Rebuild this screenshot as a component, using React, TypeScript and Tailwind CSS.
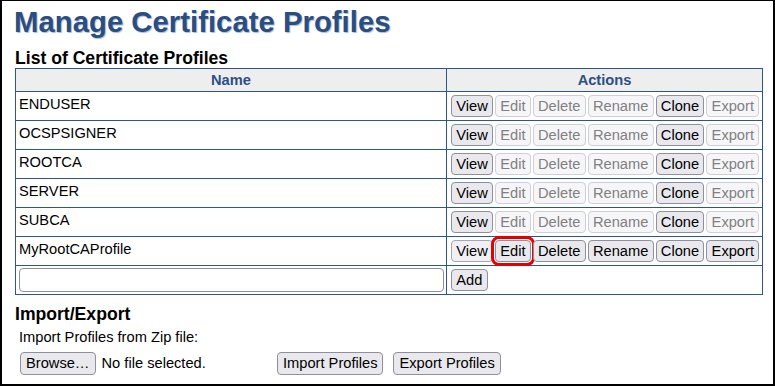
type Profile = {
  name: string
  editable: boolean
}

const profiles: Profile[] = [
  { name: 'ENDUSER', editable: false },
  { name: 'OCSPSIGNER', editable: false },
  { name: 'ROOTCA', editable: false },
  { name: 'SERVER', editable: false },
  { name: 'SUBCA', editable: false },
  { name: 'MyRootCAProfile', editable: true },
]

function Btn({
  label,
  disabled,
  highlight,
  light,
}: {
  label: string
  disabled?: boolean
  highlight?: boolean
  light?: boolean
}) {
  let cls = 'h-[22px] px-[4.25px] rounded-[4px] border leading-[20px] text-[14.67px] '
  if (disabled) {
    cls += 'bg-[#f6f6f8] border-[#cfcfd6] text-[#808080]'
  } else if (light) {
    cls += 'bg-[#f0f0f4] border-[#a6a6b2] text-black'
  } else {
    cls += 'bg-[#e9e9ed] border-[#8f8f9d] text-black'
  }
  if (highlight) {
    cls += ' outline-[3px] outline-solid outline-[#e60000] outline-offset-[1px]'
  }
  return (
    <button type="button" className={cls}>
      {label}
    </button>
  )
}

export default function App() {
  return (
    <div
      className="w-[775px] h-[386px] bg-white border-t border-l-2 border-r-2 border-b-2 border-black pl-[13px] text-[14.67px] text-black overflow-hidden"
      style={{ fontFamily: '"Liberation Sans", Arial, sans-serif' }}
    >
      {/* Title */}
      <h1 className="mt-[4px] h-[34px] leading-[34px] text-[29.33px] font-bold text-[#2b4e80] -ml-[1px] [text-shadow:1px_1px_1px_#a8bcdc]">
        Manage Certificate Profiles
      </h1>
      <h2 className="mt-[9px] h-[20px] leading-[20px] text-[17.6px] font-bold">
        List of Certificate Profiles
      </h2>

      {/* Table */}
      <div className="w-[748px] border border-[#2d5690]">
        <div className="flex h-[22px] bg-[#eeeeee] font-bold text-[#2c5086] leading-[17px]">
          <div className="w-[431px] border-r border-[#2d5690] flex items-center justify-center">
            Name
          </div>
          <div className="flex-1 flex items-center justify-center">Actions</div>
        </div>

        {profiles.map((p) => (
          <div key={p.name} className="flex h-[29px] border-t border-[#2d5690]">
            <div className="w-[431px] border-r border-[#2d5690] pl-[3px] pt-[4px] leading-[17px]">
              {p.name}
            </div>
            <div className="flex-1 flex items-center gap-[2px] pl-[4px]">
              <Btn label="View" light={p.editable} />
              <Btn label="Edit" disabled={!p.editable} highlight={p.editable} />
              <Btn label="Delete" disabled={!p.editable} />
              <Btn label="Rename" disabled={!p.editable} />
              <Btn label="Clone" />
              <Btn label="Export" disabled={!p.editable} />
            </div>
          </div>
        ))}

        <div className="flex h-[29px] border-t border-[#2d5690]">
          <div className="w-[431px] border-r border-[#2d5690] flex items-center pl-[3px]">
            <input
              type="text"
              className="w-[425px] h-[24px] border border-[#8f8f9d] rounded-[4px] bg-white px-[4px] outline-none"
            />
          </div>
          <div className="flex-1 flex items-center pl-[4px]">
            <Btn label="Add" />
          </div>
        </div>
      </div>

      {/* Import / Export */}
      <h2 className="mt-[9px] h-[20px] leading-[20px] text-[17.6px] font-bold">Import/Export</h2>
      <p className="mt-[5px] ml-[4px] leading-[17px]">Import Profiles from Zip file:</p>
      <div className="mt-[6px] ml-[5px] flex items-center">
        <div className="w-[257px] flex items-center">
          <button
            type="button"
            className="h-[23px] px-[5px] rounded-[4px] border border-[#8f8f9d] bg-[#e9e9ed] leading-[21px]"
          >
            Browse…
          </button>
          <span className="ml-[6px] leading-[17px]">No file selected.</span>
        </div>
        <button
          type="button"
          className="h-[23px] px-[5px] rounded-[4px] border border-[#8f8f9d] bg-[#e9e9ed] leading-[21px]"
        >
          Import Profiles
        </button>
        <button
          type="button"
          className="ml-[10px] h-[23px] px-[5px] rounded-[4px] border border-[#8f8f9d] bg-[#e9e9ed] leading-[21px]"
        >
          Export Profiles
        </button>
      </div>
    </div>
  )
}
